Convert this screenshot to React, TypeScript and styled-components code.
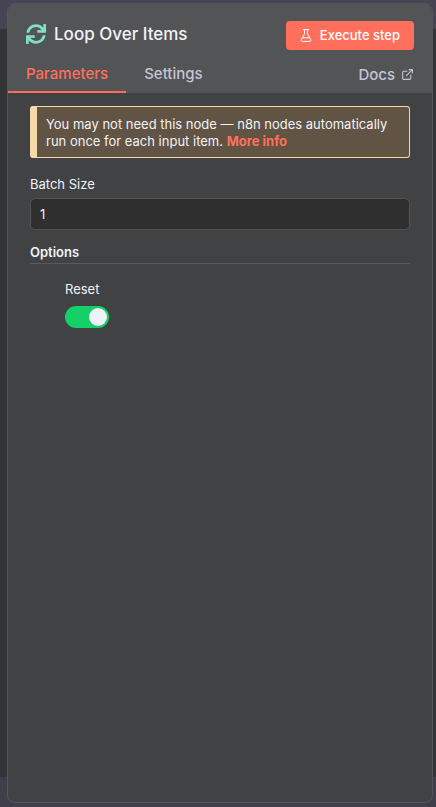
import React, { useState } from "react";
import styled, { createGlobalStyle } from "styled-components";
import { FaSync } from "react-icons/fa";
import { ExternalLink } from "lucide-react";

const GlobalStyle = createGlobalStyle`
  *, *::before, *::after { box-sizing: border-box; }
  body {
    margin: 0;
    background: #323334;
    color: #f1f2f8;
    font-family: Inter, "Liberation Sans", sans-serif;
    font-size: 13px;
    line-height: 17px;
  }
  button, input { font: inherit; color: inherit; }
`;

const Page = styled.div`
  display: flex;
  min-height: 100vh;
  padding: 3px 3px 4px 7px;
  background:
    linear-gradient(#464452, #464452) top / 100% 29px no-repeat,
    linear-gradient(#413e4b, #413e4b) bottom / 100% 30px no-repeat,
    #323334;
`;

const Panel = styled.main`
  flex: 1;
  min-width: 0;
  border: 1px solid #555658;
  border-radius: 8px;
  background: #414244;
  overflow: hidden;
`;

const Header = styled.header`
  background: #535456;
`;

const TitleRow = styled.div`
  display: flex;
  align-items: flex-start;
  justify-content: space-between;
  padding: 17px 18px 0;
`;

const Title = styled.h1`
  display: flex;
  align-items: center;
  gap: 8px;
  margin: 0;
  font-size: 17px;
  font-weight: 500;
  line-height: 26px;

  svg { color: #7fdfc7; }
`;

const ExecuteButton = styled.button`
  display: flex;
  align-items: center;
  gap: 8px;
  height: 29px;
  padding: 0 14px;
  border: 0;
  border-radius: 4px;
  background: #ff6f5c;
  color: #fff;
  font-weight: 500;
  cursor: pointer;
`;

const TabBar = styled.nav`
  display: flex;
  padding-top: 10px;
`;

const Tab = styled.button<{ $active: boolean }>`
  height: 33px;
  padding: 0 18px 4px;
  border: 0;
  border-bottom: 2px solid ${(p) => (p.$active ? "#ff6f5c" : "transparent")};
  background: none;
  color: ${(p) => (p.$active ? "#ff6f5c" : "#c2c5d4")};
  font-size: 15px;
  font-weight: 500;
  line-height: 20px;
  cursor: pointer;
`;

const DocsLink = styled.a`
  display: flex;
  align-items: center;
  gap: 6px;
  height: 28px;
  margin-left: auto;
  padding-right: 18px;
  color: #c2c5d4;
  font-size: 15px;
  font-weight: 500;
  text-decoration: none;
`;

const Body = styled.div`
  display: flex;
  flex-direction: column;
  padding: 13px 22px;
`;

const Notice = styled.p`
  margin: 0 0 18px;
  padding: 9px 9px 7px;
  border: 1px solid #f5d9a9;
  border-left-width: 7px;
  border-radius: 3px;
  background: #615444;
`;

const MoreLink = styled.a`
  color: #ff6f5c;
  font-weight: 700;
  text-decoration: none;
`;

const FieldLabel = styled.label`
  margin-bottom: 5px;
`;

const TextInput = styled.input`
  width: 100%;
  height: 32px;
  padding: 0 9px;
  border: 1px solid #525355;
  border-radius: 5px;
  background: #2e2f2e;
`;

const SectionTitle = styled.h2`
  margin: 14px 0 17px;
  padding-bottom: 2px;
  border-bottom: 1px solid #58595b;
  font-size: 13px;
  font-weight: 600;
  line-height: 17px;
`;

const Option = styled.div`
  display: flex;
  flex-direction: column;
  align-items: flex-start;
  padding-left: 35px;
`;

const OptionLabel = styled(FieldLabel)`
  margin-bottom: 8px;
`;

const Switch = styled.input`
  display: flex;
  align-items: center;
  width: 44px;
  height: 22px;
  margin: 0;
  padding: 0 2px;
  appearance: none;
  border-radius: 11px;
  background: #77787c;
  cursor: pointer;

  &::before {
    content: "";
    width: 18px;
    height: 18px;
    border-radius: 50%;
    background: #f1f2f8;
  }

  &:checked {
    justify-content: flex-end;
    background: #14d069;
  }
`;

const tabs = ["Parameters", "Settings"];

function FlaskIcon() {
  return (
    <svg width="12" height="13" viewBox="0 0 12 13" fill="none" stroke="currentColor" strokeLinecap="round" strokeLinejoin="round" aria-hidden>
      <path d="M3.2 .6h5.6M4.5 .6v4.2L1.3 10.6c-.5 1 0 1.8 1 1.8h7.4c1 0 1.5-.8 1-1.8L7.5 4.8V.6M2.9 8.8h6.2" />
    </svg>
  );
}

export default function App() {
  const [activeTab, setActiveTab] = useState("Parameters");
  const [batchSize, setBatchSize] = useState("1");
  const [reset, setReset] = useState(true);

  return (
    <>
      <GlobalStyle />
      <Page>
        <Panel>
          <Header>
            <TitleRow>
              <Title>
                <FaSync size={20} aria-hidden />
                Loop Over Items
              </Title>
              <ExecuteButton type="button">
                <FlaskIcon />
                Execute step
              </ExecuteButton>
            </TitleRow>
            <TabBar>
              {tabs.map((tab) => (
                <Tab key={tab} type="button" $active={tab === activeTab} onClick={() => setActiveTab(tab)}>
                  {tab}
                </Tab>
              ))}
              <DocsLink href="#docs">
                Docs
                <ExternalLink size={13} strokeWidth={2} aria-hidden />
              </DocsLink>
            </TabBar>
          </Header>
          <Body>
            <Notice>
              You may not need this node — n8n nodes automatically run once for each input item.{" "}
              <MoreLink href="#more-info">More info</MoreLink>
            </Notice>
            <FieldLabel htmlFor="batch-size">Batch Size</FieldLabel>
            <TextInput
              id="batch-size"
              inputMode="numeric"
              value={batchSize}
              onChange={(e) => setBatchSize(e.target.value)}
            />
            <SectionTitle>Options</SectionTitle>
            <Option>
              <OptionLabel htmlFor="reset">Reset</OptionLabel>
              <Switch
                id="reset"
                type="checkbox"
                role="switch"
                checked={reset}
                onChange={(e) => setReset(e.target.checked)}
              />
            </Option>
          </Body>
        </Panel>
      </Page>
    </>
  );
}
